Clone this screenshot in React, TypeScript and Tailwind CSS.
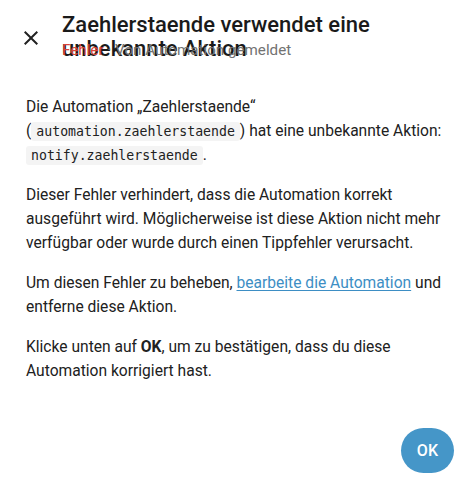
function CloseIcon() {
  return (
    <svg viewBox="0 0 24 24" className="h-6 w-6" fill="currentColor">
      <path d="M19 6.41 17.59 5 12 10.59 6.41 5 5 6.41 10.59 12 5 17.59 6.41 19 12 13.41 17.59 19 19 17.59 13.41 12z" />
    </svg>
  );
}

function Code({ children }: { children: string }) {
  return (
    <code className="rounded-[3px] bg-[#f4f4f4] px-[5px] py-[2px] font-['DejaVu_Sans_Mono',monospace] text-[13.2px] leading-none text-[#212121]">
      {children}
    </code>
  );
}

export default function App() {
  return (
    <div className="flex h-[500px] w-[472px] flex-col bg-white font-['Roboto',sans-serif] text-[#212121]">
      <header className="flex items-start pt-[13px]">
        <button className="ml-[19px] mt-[13px] flex h-6 w-6 shrink-0 items-center justify-center text-[#212121]">
          <CloseIcon />
        </button>
        <div className="ml-[19px] min-w-0 flex-1 pr-4">
          <h1 className="h-[27px] overflow-visible text-[22px] font-medium leading-6 text-[#1a1a1a]">
            Zaehlerstaende verwendet eine unbekannte Aktion
          </h1>
          <p className="text-[15.2px] leading-5 text-[#727272]">
            <span className="text-[#db4437]">Fehler</span> · Von Automation gemeldet
          </p>
        </div>
      </header>

      <main className="flex-1 space-y-4 pl-[26px] pr-6 pt-[35px] text-[15.6px] leading-6">
        <p>
          Die Automation „Zaehlerstaende“ (<Code>automation.zaehlerstaende</Code>) hat eine unbekannte Aktion:{' '}
          <Code>notify.zaehlerstaende</Code>.
        </p>
        <p>
          Dieser Fehler verhindert, dass die Automation korrekt ausgeführt wird. Möglicherweise ist diese Aktion nicht
          mehr verfügbar oder wurde durch einen Tippfehler verursacht.
        </p>
        <p>
          Um diesen Fehler zu beheben,{' '}
          <a href="#" className="text-[#3d8ec4] underline underline-offset-2">
            bearbeite die Automation
          </a>{' '}
          und entferne diese Aktion.
        </p>
        <p>
          Klicke unten auf <b className="font-bold">OK</b>, um zu bestätigen, dass du diese Automation korrigiert hast.
        </p>
      </main>

      <footer className="flex justify-end pb-[27px] pr-[18px]">
        <button className="h-[45px] rounded-full bg-[#4596c8] px-4 text-[16px] font-medium text-white">OK</button>
      </footer>
    </div>
  );
}
